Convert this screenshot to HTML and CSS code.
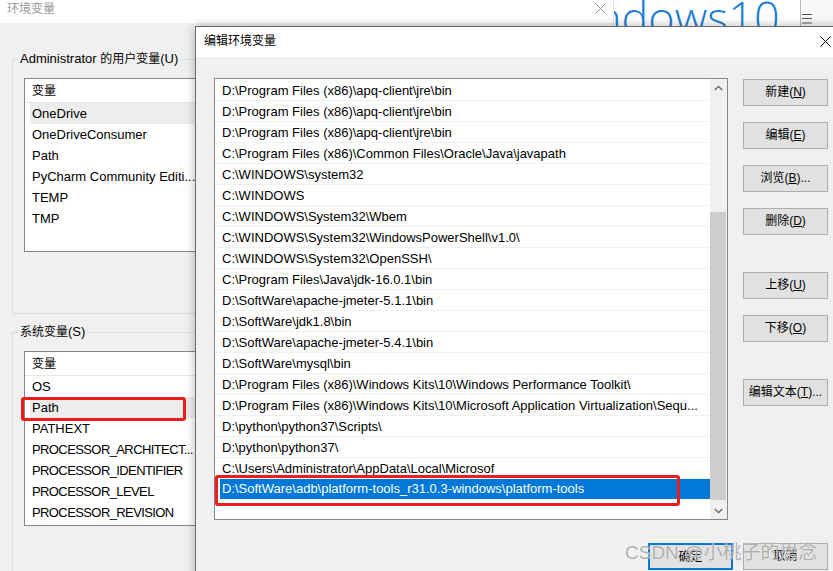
FILE: index.html
```html
<!DOCTYPE html>
<html lang="zh-CN">
<head>
<meta charset="utf-8">
<title>编辑环境变量</title>
<link rel="stylesheet" href="styles.css">
</head>
<body>
<div class="desktop">
  <div class="back-win">
    <div class="back-top">
      <div class="back-titlebar">
        <span class="back-title">环境变量</span>
        <svg class="back-close" width="11" height="11" viewBox="0 0 11 11"><path d="M0.5 0.5L10.5 10.5M10.5 0.5L0.5 10.5" stroke="#8a8a8a" stroke-width="1" fill="none"/></svg>
      </div>
      <div class="logo"><span class="logo-text">ndows10</span></div>
      <div class="menu-strip"><svg width="11" height="11" viewBox="0 0 11 11"><path d="M0 1.5H10M0 5.5H10M0 10H10" stroke="#555" stroke-width="1.2" fill="none"/></svg></div>
    </div>
    <div class="back-body">
      <fieldset class="group group-user">
        <legend class="group-label">Administrator <span class="zh">的用户变量</span>(U)</legend>
        <div class="varlist varlist-user">
          <div class="var-head"><span class="zh">变量</span></div>
          <div class="var-row is-hover">OneDrive</div>
          <div class="var-row">OneDriveConsumer</div>
          <div class="var-row">Path</div>
          <div class="var-row">PyCharm Community Editi...</div>
          <div class="var-row">TEMP</div>
          <div class="var-row">TMP</div>
        </div>
      </fieldset>
      <fieldset class="group group-sys">
        <legend class="group-label"><span class="zh">系统变量</span>(S)</legend>
        <div class="varlist varlist-sys">
          <div class="var-head"><span class="zh">变量</span></div>
          <div class="var-row">OS</div>
          <div class="var-row is-hover">Path</div>
          <div class="var-row">PATHEXT</div>
          <div class="var-row var-caps">PROCESSOR_ARCHITECT...</div>
          <div class="var-row var-caps">PROCESSOR_IDENTIFIER</div>
          <div class="var-row var-caps">PROCESSOR_LEVEL</div>
          <div class="var-row var-caps">PROCESSOR_REVISION</div>
          <div class="mark mark-path"></div>
        </div>
      </fieldset>
    </div>
  </div>

  <div class="dlg">
    <div class="dlg-titlebar">
      <span class="dlg-title">编辑环境变量</span>
      <svg class="dlg-close" width="11" height="11" viewBox="0 0 11 11"><path d="M0.5 0.5L10.5 10.5M10.5 0.5L0.5 10.5" stroke="#000" stroke-width="1" fill="none"/></svg>
    </div>
    <div class="dlg-body">
      <div class="dlg-main">
        <div class="pathlist">
          <div class="path-rows">
            <div class="path-row">D:\Program Files (x86)\apq-client\jre\bin</div>
            <div class="path-row">D:\Program Files (x86)\apq-client\jre\bin</div>
            <div class="path-row">D:\Program Files (x86)\apq-client\jre\bin</div>
            <div class="path-row">C:\Program Files (x86)\Common Files\Oracle\Java\javapath</div>
            <div class="path-row">C:\WINDOWS\system32</div>
            <div class="path-row">C:\WINDOWS</div>
            <div class="path-row">C:\WINDOWS\System32\Wbem</div>
            <div class="path-row">C:\WINDOWS\System32\WindowsPowerShell\v1.0\</div>
            <div class="path-row">C:\WINDOWS\System32\OpenSSH\</div>
            <div class="path-row">C:\Program Files\Java\jdk-16.0.1\bin</div>
            <div class="path-row">D:\SoftWare\apache-jmeter-5.1.1\bin</div>
            <div class="path-row">D:\SoftWare\jdk1.8\bin</div>
            <div class="path-row">D:\SoftWare\apache-jmeter-5.4.1\bin</div>
            <div class="path-row">D:\SoftWare\mysql\bin</div>
            <div class="path-row">D:\Program Files (x86)\Windows Kits\10\Windows Performance Toolkit\</div>
            <div class="path-row">D:\Program Files (x86)\Windows Kits\10\Microsoft Application Virtualization\Sequ...</div>
            <div class="path-row">D:\python\python37\Scripts\</div>
            <div class="path-row">D:\python\python37\</div>
            <div class="path-row">C:\Users\Administrator\AppData\Local\Microsof</div>
            <div class="path-row is-selected">D:\SoftWare\adb\platform-tools_r31.0.3-windows\platform-tools</div>
          </div>
          <div class="vscroll">
            <div class="vs-btn"><svg width="9" height="6" viewBox="0 0 9 6"><path d="M0.8 5L4.5 1.3L8.2 5" stroke="#606060" stroke-width="1.3" fill="none"/></svg></div>
            <div class="vs-track"><div class="vs-thumb"></div></div>
            <div class="vs-btn"><svg width="9" height="6" viewBox="0 0 9 6"><path d="M0.8 1L4.5 4.7L8.2 1" stroke="#606060" stroke-width="1.3" fill="none"/></svg></div>
          </div>
          <div class="mark mark-new"></div>
        </div>
        <div class="side-btns">
          <button class="btn gap-first">新建(<u>N</u>)</button>
          <button class="btn gap-s">编辑(<u>E</u>)</button>
          <button class="btn gap-s">浏览(<u>B</u>)...</button>
          <button class="btn gap-s">删除(<u>D</u>)</button>
          <button class="btn gap-l">上移(<u>U</u>)</button>
          <button class="btn gap-s">下移(<u>O</u>)</button>
          <button class="btn gap-l">编辑文本(<u>T</u>)...</button>
        </div>
      </div>
      <div class="dlg-foot">
        <button class="btn btn-default">确定</button>
        <button class="btn">取消</button>
      </div>
    </div>
  </div>

  <div class="watermark">CSDN @小桃子的思念</div>
</div>
</body>
</html>
```

FILE: styles.css
```css
* { box-sizing: border-box; }

body {
  margin: 0;
  background: #f0f0f0;
  font-family: "Liberation Sans", "Noto Sans CJK SC", sans-serif;
  font-size: 13px;
  color: #000;
}

.zh { font-size: 12px; }

.desktop {
  position: relative;
  width: 833px;
  height: 571px;
  overflow: hidden;
  background: #f0f0f0;
}

/* ---------- background window ---------- */
.back-win {
  position: absolute;
  left: 0;
  top: 0;
  width: 833px;
  height: 571px;
  background: #f0f0f0;
}

.back-top {
  display: flex;
  height: 26px;
}

.back-titlebar {
  width: 613px;
  height: 23px;
  background: #fff;
  display: flex;
  justify-content: space-between;
  align-items: flex-start;
  padding: 3px 7px 0 7px;
}

.back-title {
  font-size: 12px;
  line-height: 12px;
  color: #9a9a9a;
}

.logo {
  width: 187px;
  height: 26px;
  background: #fff;
  overflow: hidden;
  border-left: 1px solid #e4e4e4;
}

.logo-text {
  display: block;
  font-family: "Open Sans", "Noto Sans", sans-serif;
  font-weight: 300;
  font-size: 45px;
  line-height: 45px;
  color: #1a7fd4;
  margin: -6px 0 0 -19px;
  white-space: nowrap;
}

.menu-strip {
  width: 33px;
  height: 26px;
  background: #f8f8f8;
  border-left: 1px solid #b8b8b8;
  padding: 12px 0 0 1px;
}

.back-body {
  padding: 25px 0 0 12px;
}

.group {
  margin: 0;
  padding: 11px 0 60px 0;
  border: 1px solid #dcdcdc;
  width: 560px;
  min-width: 0;
}

.group-user { padding-bottom: 61px; }
.group-sys { margin-top: 10px; }

.group-label {
  margin-left: 5px;
  padding: 0 2px;
  line-height: 16px;
  font-size: 13px;
}

.varlist {
  position: relative;
  background: #fff;
  border: 1px solid #828790;
  width: 420px;
  margin-left: 11px;
}

.varlist-user { height: 174px; }
.varlist-sys { height: 175px; }

.var-head {
  height: 24px;
  line-height: 23px;
  padding-left: 7px;
  border-bottom: 1px solid #e5e5e5;
}

.var-row {
  height: 21px;
  line-height: 21px;
  margin-left: 5px;
  padding-left: 2px;
  white-space: nowrap;
}

.var-row.is-hover { background: #ededed; }

.var-caps { letter-spacing: -0.6px; }

.mark {
  position: absolute;
  border: 3px solid #ee1d1d;
  border-radius: 3px;
  pointer-events: none;
}

.mark-path {
  left: -4px;
  top: 45px;
  width: 165px;
  height: 24px;
}

/* ---------- front dialog ---------- */
.dlg {
  position: absolute;
  left: 195px;
  top: 26px;
  width: 646px;
  height: 560px;
  background: #f0f0f0;
  border: 1px solid #6a6a6a;
  box-shadow: 0 0 10px rgba(0, 0, 0, 0.28);
}

.dlg-titlebar {
  height: 30px;
  background: #fff;
  display: flex;
  align-items: center;
  justify-content: space-between;
  padding: 0 9px 0 8px;
}

.dlg-title {
  font-size: 12px;
  line-height: 14px;
  margin-top: -3px;
}

.dlg-close { margin-top: -2px; }

.dlg-body {
  padding: 21px 12px 0 18px;
}

.dlg-main {
  display: flex;
  align-items: flex-start;
}

.pathlist {
  position: relative;
  display: flex;
  width: 514px;
  height: 442px;
  background: #fff;
  border: 1px solid #828790;
}

.path-rows {
  flex: 1;
  min-width: 0;
  padding-top: 1px;
}

.path-row {
  height: 21px;
  line-height: 21px;
  padding-left: 7px;
  border-bottom: 1px solid #f0f0f0;
  white-space: nowrap;
  overflow: hidden;
}

.path-row.is-selected {
  margin-left: 5px;
  padding-left: 2px;
  background: #0078d7;
  color: #fff;
  border-bottom: none;
  height: 20px;
  line-height: 20px;
}

.vscroll {
  width: 17px;
  background: #f0f0f0;
  display: flex;
  flex-direction: column;
}

.vs-btn {
  height: 17px;
  display: flex;
  align-items: center;
  justify-content: center;
}

.vs-track { flex: 1; }

.vs-thumb {
  margin: 116px 1px 0 0;
  height: 288px;
  background: #cdcdcd;
}

.mark-new {
  left: 0;
  top: 396px;
  width: 465px;
  height: 31px;
}

.side-btns {
  display: flex;
  flex-direction: column;
  width: 85px;
  margin-left: 15px;
}

.btn {
  width: 85px;
  height: 27px;
  padding: 0;
  background: #e1e1e1;
  border: 1px solid #adadad;
  font-family: "Liberation Sans", "Noto Sans CJK SC", sans-serif;
  font-size: 12px;
  color: #000;
  line-height: 25px;
}

.gap-first { margin-top: 1px; }
.gap-s { margin-top: 16px; }
.gap-l { margin-top: 37px; }

.dlg-foot {
  display: flex;
  justify-content: flex-end;
  gap: 10px;
  margin-top: 23px;
}

.btn-default { border: 2px solid #0078d7; }

/* ---------- watermark ---------- */
.watermark {
  position: absolute;
  left: 625px;
  top: 541px;
  font-family: "Liberation Sans", "Noto Sans CJK SC", sans-serif;
  font-size: 19px;
  line-height: 24px;
  white-space: nowrap;
  color: rgba(150, 150, 150, 0.75);
  text-shadow: 0 0 1px rgba(255, 255, 255, 0.9);
  pointer-events: none;
}
```
